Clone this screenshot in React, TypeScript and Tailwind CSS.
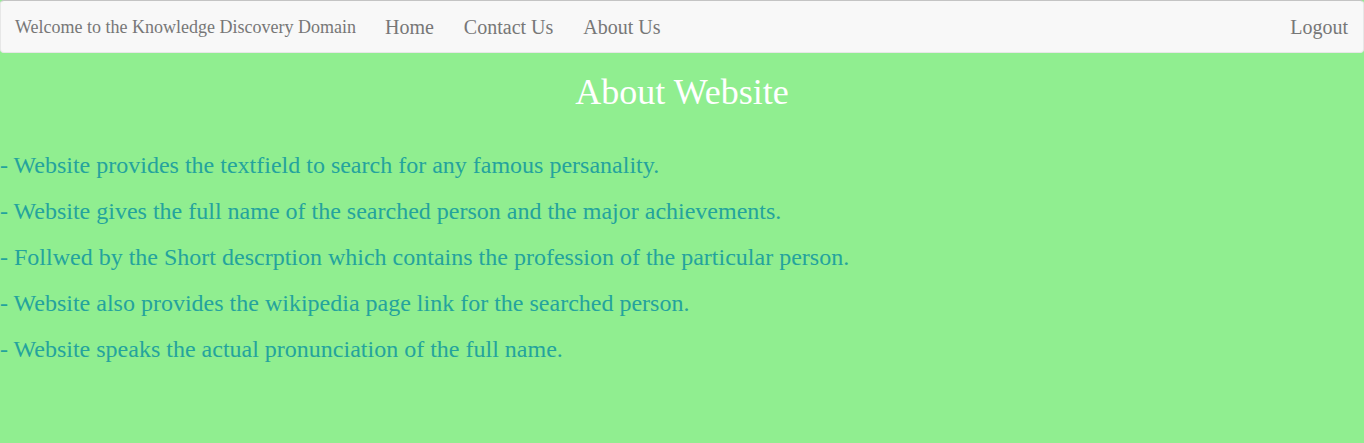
import React from "react";

const items = [
  "- Website provides the textfield to search for any famous persanality.",
  "- Website gives the full name of the searched person and the major achievements.",
  "- Follwed by the Short descrption which contains the profession of the particular person.",
  "- Website also provides the wikipedia page link for the searched person.",
  "- Website speaks the actual pronunciation of the full name.",
];

export default function App() {
  return (
    <div
      className="min-h-[443px] bg-[#90EE90]"
      style={{ fontFamily: '"Liberation Serif", "Times New Roman", serif' }}
    >
      <nav className="flex h-[53px] items-center justify-between rounded-[4px] border border-[#e7e7e7] border-t-[#c4c4c4] bg-[#f8f8f8] text-[#777]">
        <div className="flex items-center">
          <span className="pl-[14px] pr-[14px] text-[18px] leading-[20px]">
            Welcome to the Knowledge Discovery Domain
          </span>
          <span className="px-[15px] text-[20px] leading-[20px]">Home</span>
          <span className="px-[15px] text-[20px] leading-[20px]">Contact Us</span>
          <span className="px-[15px] text-[20px] leading-[20px]">About Us</span>
        </div>
        <span className="px-[15px] text-[20px] leading-[20px]">Logout</span>
      </nav>
      <h1 className="mt-[19px] text-center text-[36px] leading-[40px] text-white">
        About Website
      </h1>
      <div className="mt-[35px] flex flex-col text-[24px] leading-[36px] text-[#24A39D]">
        {items.map((t) => (
          <p key={t} className="mb-[10px]">
            {t}
          </p>
        ))}
      </div>
    </div>
  );
}
